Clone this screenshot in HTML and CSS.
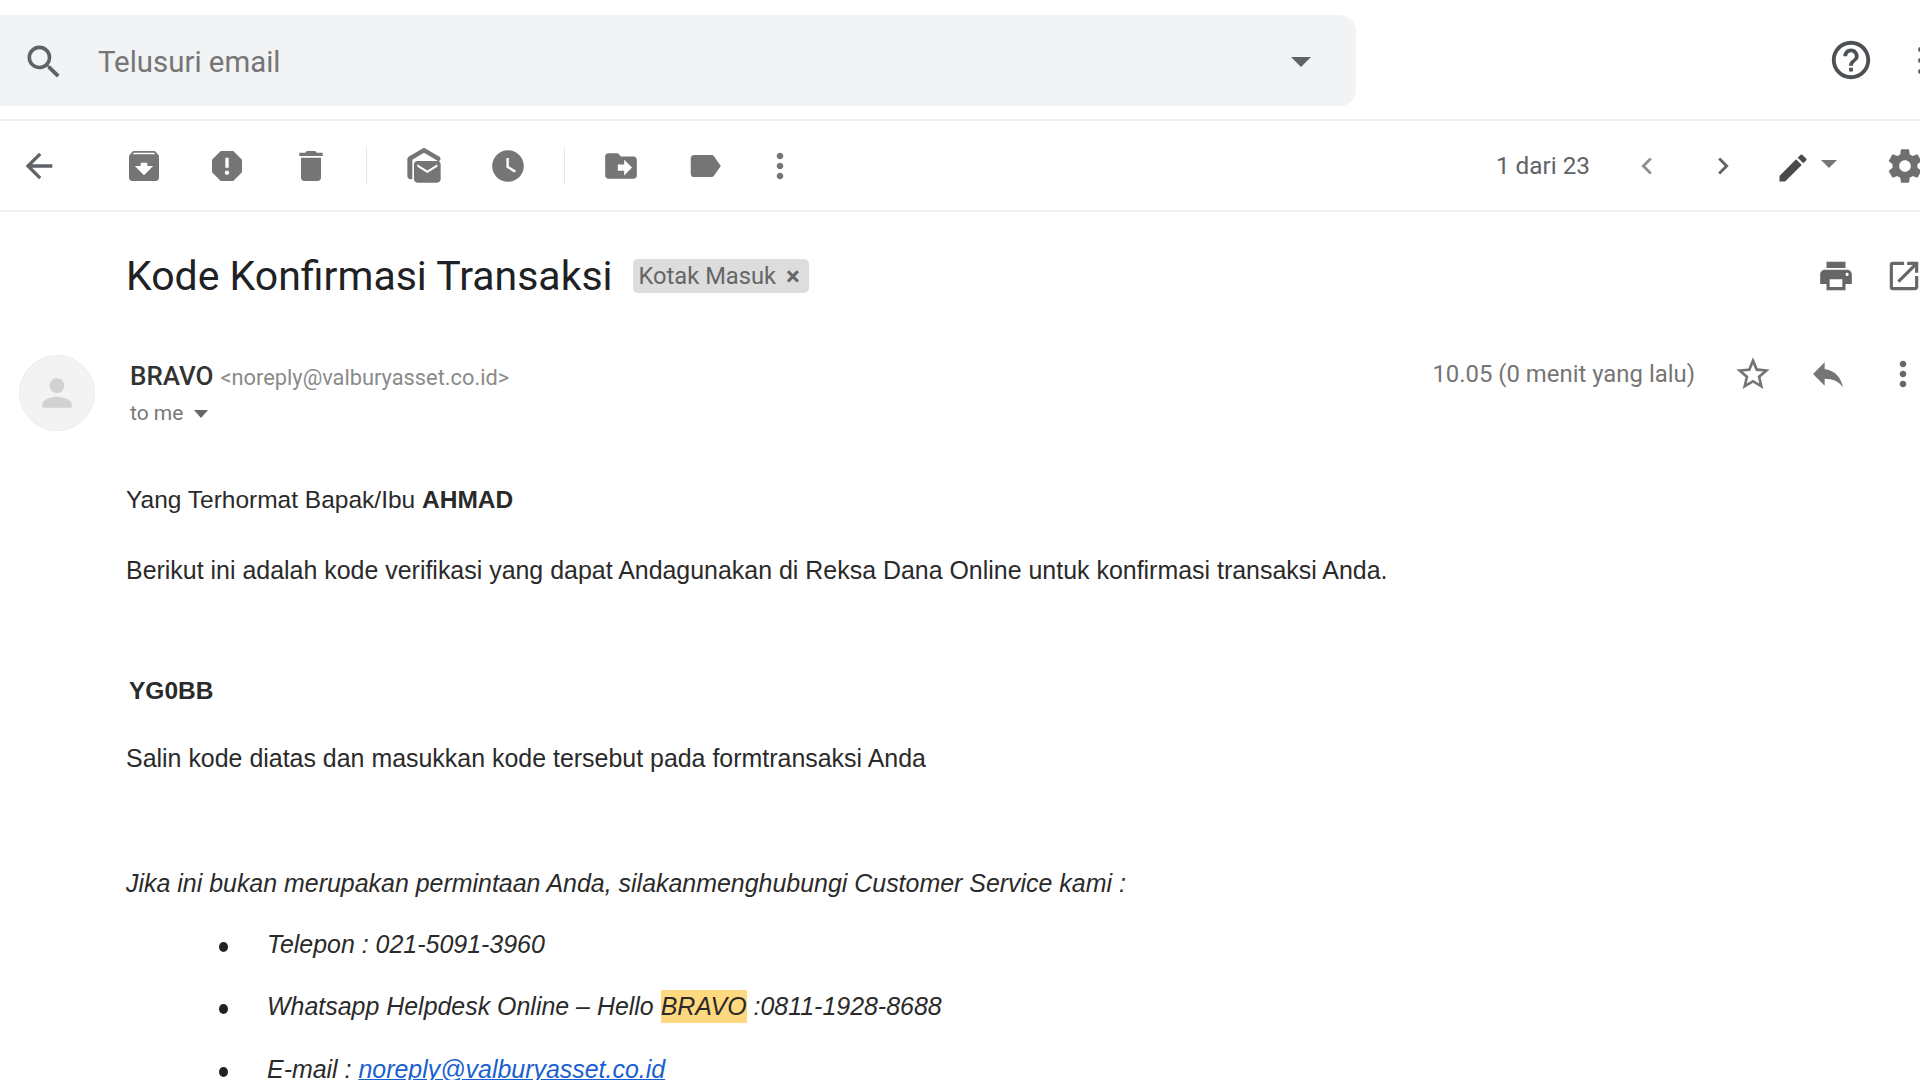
FILE: index.html
```html
<!DOCTYPE html>
<html lang="id">
<head>
<meta charset="utf-8">
<title>Kode Konfirmasi Transaksi</title>
<link rel="stylesheet" href="styles.css">
</head>
<body>
<header class="topbar">
  <div class="search">
    <svg class="ic-search" viewBox="0 0 24 24"><path d="M15.5 14h-.79l-.28-.27A6.47 6.47 0 0 0 16 9.5 6.5 6.5 0 1 0 9.5 16c1.61 0 3.09-.59 4.23-1.57l.27.28v.79l5 4.99L20.49 19l-4.99-5zm-6 0C7.01 14 5 11.99 5 9.5S7.01 5 9.5 5 14 7.01 14 9.5 11.99 14 9.5 14z"/></svg>
    <span class="search-text">Telusuri email</span>
    <span class="search-caret"></span>
  </div>
  <div class="top-right">
    <svg class="ic-help" viewBox="0 0 24 24"><path d="M11 18h2v-2h-2v2zm1-16C6.48 2 2 6.48 2 12s4.48 10 10 10 10-4.48 10-10S17.52 2 12 2zm0 18c-4.41 0-8-3.59-8-8s3.59-8 8-8 8 3.59 8 8-3.59 8-8 8zm0-14c-2.21 0-4 1.79-4 4h2c0-1.1.9-2 2-2s2 .9 2 2c0 2-3 1.75-3 5h2c0-2.25 3-2.5 3-5 0-2.21-1.79-4-4-4z"/></svg>
    <span class="apps-dots"><i></i><i></i><i></i></span>
  </div>
</header>

<nav class="toolbar">
  <span class="tb back"><svg viewBox="0 0 24 24"><path d="M20 11H7.83l5.59-5.59L12 4l-8 8 8 8 1.41-1.41L7.83 13H20v-2z"/></svg></span>
  <span class="tb first"><svg viewBox="0 0 24 24"><path d="M20.54 5.23l-1.39-1.68C18.88 3.21 18.47 3 18 3H6c-.47 0-.88.21-1.16.55L3.46 5.23C3.17 5.57 3 6.02 3 6.5V19c0 1.1.9 2 2 2h14c1.1 0 2-.9 2-2V6.5c0-.48-.17-.93-.46-1.27zM12 17.5L6.5 12H10v-2h4v2h3.5L12 17.5zM5.12 5l.81-1h12l.94 1H5.12z"/></svg></span>
  <span class="tb"><svg viewBox="0 0 24 24"><path d="M15.73 3H8.27L3 8.27v7.46L8.27 21h7.46L21 15.73V8.27L15.73 3zM12 17.3c-.72 0-1.3-.58-1.3-1.3 0-.72.58-1.3 1.3-1.3.72 0 1.3.58 1.3 1.3 0 .72-.58 1.3-1.3 1.3zm1-4.3h-2V7h2v6z"/></svg></span>
  <span class="tb"><svg viewBox="0 0 24 24"><path d="M6 19c0 1.1.9 2 2 2h8c1.1 0 2-.9 2-2V7H6v12zM19 4h-3.5l-1-1h-5l-1 1H5v2h14V4z"/></svg></span>
  <span class="sep sep-a"></span>
  <span class="tb"><svg viewBox="0 0 24 24"><path d="M21.99 8c0-.72-.37-1.35-.94-1.7L12 1 2.95 6.3C2.38 6.65 2 7.28 2 8v10c0 1.1.9 2 2 2h1V8.2l7-4.1 8.9 5.2L22 8zM20 9H8c-1.1 0-2 .9-2 2v9c0 1.1.9 2 2 2h12c1.1 0 2-.9 2-2v-9c0-1.1-.9-2-2-2zm0 3.5l-6 3.75-6-3.75V11l6 3.75L20 11v1.5z"/></svg></span>
  <span class="tb tb-small"><svg viewBox="0 0 24 24"><path d="M11.99 2C6.47 2 2 6.48 2 12s4.47 10 9.99 10C17.52 22 22 17.52 22 12S17.52 2 11.99 2zM16.2 16.2L11 13V7h1.5v5.2l4.5 2.7-.8 1.3z"/></svg></span>
  <span class="sep sep-b"></span>
  <span class="tb tb-small"><svg viewBox="0 0 24 24"><path d="M20 6h-8l-2-2H4c-1.1 0-2 .9-2 2v12c0 1.1.9 2 2 2h16c1.1 0 2-.9 2-2V8c0-1.1-.9-2-2-2zm-6 12v-3h-4v-4h4V8l5 5-5 5z"/></svg></span>
  <span class="tb tb-small"><svg viewBox="0 0 24 24"><path d="M17.63 5.84C17.27 5.33 16.67 5 16 5L5 5.01C3.9 5.01 3 5.9 3 7v10c0 1.1.9 1.99 2 1.99L16 19c.67 0 1.27-.33 1.63-.84L22 12l-4.37-6.16z"/></svg></span>
  <span class="tb narrow"><svg viewBox="0 0 24 24"><path d="M12 8c1.1 0 2-.9 2-2s-.9-2-2-2-2 .9-2 2 .9 2 2 2zm0 2c-1.1 0-2 .9-2 2s.9 2 2 2 2-.9 2-2-.9-2-2-2zm0 6c-1.1 0-2 .9-2 2s.9 2 2 2 2-.9 2-2-.9-2-2-2z"/></svg></span>
  <div class="tb-right">
    <span class="pager">1 dari 23</span>
    <span class="chev chev-prev"><svg viewBox="0 0 24 24"><path d="M15.41 7.41L14 6l-6 6 6 6 1.41-1.41L10.83 12z"/></svg></span>
    <span class="chev"><svg viewBox="0 0 24 24"><path d="M10 6L8.59 7.41 13.17 12l-4.58 4.59L10 18l6-6z"/></svg></span>
    <span class="pen"><svg viewBox="0 0 24 24"><path d="M3 17.25V21h3.75L17.81 9.94l-3.75-3.75L3 17.25zM20.71 7.04a1 1 0 0 0 0-1.41l-2.34-2.34a1 1 0 0 0-1.41 0l-1.83 1.83 3.75 3.75 1.83-1.83z"/></svg></span>
    <span class="pen-caret"></span>
    <span class="gear"><svg viewBox="0 0 24 24"><path d="M19.43 12.98c.04-.32.07-.64.07-.98s-.03-.66-.07-.98l2.11-1.65c.19-.15.24-.42.12-.64l-2-3.46c-.12-.22-.39-.3-.61-.22l-2.49 1c-.52-.4-1.08-.73-1.69-.98l-.38-2.65A.49.49 0 0 0 14 2h-4c-.25 0-.46.18-.49.42l-.38 2.65c-.61.25-1.17.59-1.69.98l-2.49-1c-.23-.09-.49 0-.61.22l-2 3.46c-.13.22-.07.49.12.64l2.11 1.65c-.04.32-.07.65-.07.98s.03.66.07.98l-2.11 1.65c-.19.15-.24.42-.12.64l2 3.46c.12.22.39.3.61.22l2.49-1c.52.4 1.08.73 1.69.98l.38 2.65c.03.24.24.42.49.42h4c.25 0 .46-.18.49-.42l.38-2.65c.61-.25 1.17-.59 1.69-.98l2.49 1c.23.09.49 0 .61-.22l2-3.46c.12-.22.07-.49-.12-.64l-2.11-1.65zM12 15.5c-1.93 0-3.5-1.57-3.5-3.5s1.57-3.5 3.5-3.5 3.5 1.57 3.5 3.5-1.57 3.5-3.5 3.5z"/></svg></span>
  </div>
</nav>

<section class="subject">
  <h1 class="subject-title">Kode Konfirmasi Transaksi</h1>
  <span class="badge">Kotak Masuk <b class="badge-x">×</b></span>
  <div class="subject-actions">
    <svg class="ic-print" viewBox="0 0 24 24"><path d="M19 8H5c-1.66 0-3 1.34-3 3v6h4v4h12v-4h4v-6c0-1.66-1.34-3-3-3zm-3 11H8v-5h8v5zm3-7c-.55 0-1-.45-1-1s.45-1 1-1 1 .45 1 1-.45 1-1 1zm-1-9H6v4h12V3z"/></svg>
    <svg class="ic-open" viewBox="0 0 24 24"><path d="M19 19H5V5h7V3H5a2 2 0 0 0-2 2v14a2 2 0 0 0 2 2h14c1.1 0 2-.9 2-2v-7h-2v7zM14 3v2h3.59l-9.83 9.83 1.41 1.41L19 6.41V10h2V3h-7z"/></svg>
  </div>
</section>

<section class="sender">
  <div class="avatar"><svg viewBox="0 0 24 24"><path d="M12 12c2.21 0 4-1.79 4-4s-1.79-4-4-4-4 1.79-4 4 1.79 4 4 4zm0 2c-2.67 0-8 1.34-8 4v2h16v-2c0-2.66-5.33-4-8-4z"/></svg></div>
  <div class="sender-info">
    <div class="from"><span class="from-name">BRAVO</span> <span class="from-mail">&lt;noreply@valburyasset.co.id&gt;</span></div>
    <div class="to">to me <span class="to-caret"></span></div>
  </div>
  <div class="sender-right">
    <span class="time">10.05 (0 menit yang lalu)</span>
    <span class="act"><svg viewBox="0 0 24 24"><path d="M22 9.24l-7.19-.62L12 2 9.19 8.63 2 9.24l5.46 4.73L5.82 21 12 17.27 18.18 21l-1.63-7.03L22 9.24zM12 15.4l-3.76 2.27 1-4.28-3.32-2.88 4.38-.38L12 6.1l1.71 4.04 4.38.38-3.32 2.88 1 4.28L12 15.4z"/></svg></span>
    <span class="act"><svg viewBox="0 0 24 24"><path d="M10 9V5l-7 7 7 7v-4.1c5 0 8.5 1.6 11 5.1-1-5-4-10-11-11z"/></svg></span>
    <span class="act act-more"><svg viewBox="0 0 24 24"><path d="M12 8c1.1 0 2-.9 2-2s-.9-2-2-2-2 .9-2 2 .9 2 2 2zm0 2c-1.1 0-2 .9-2 2s.9 2 2 2 2-.9 2-2-.9-2-2-2zm0 6c-1.1 0-2 .9-2 2s.9 2 2 2 2-.9 2-2-.9-2-2-2z"/></svg></span>
  </div>
</section>

<main class="message">
  <p class="greet">Yang Terhormat Bapak/Ibu <strong>AHMAD</strong></p>
  <p class="intro">Berikut ini adalah kode verifikasi yang dapat Andagunakan di Reksa Dana Online untuk konfirmasi transaksi Anda.</p>
  <p class="code"><strong>YG0BB</strong></p>
  <p class="copy">Salin kode diatas dan masukkan kode tersebut pada formtransaksi Anda</p>
  <p class="note"><em>Jika ini bukan merupakan permintaan Anda, silakanmenghubungi Customer Service kami :</em></p>
  <ul class="contacts">
    <li><em>Telepon : 021-5091-3960</em></li>
    <li><em>Whatsapp Helpdesk Online – Hello <mark class="hl">BRAVO</mark> :0811-1928-8688</em></li>
    <li><em>E-mail : <a class="mail-link" href="#">noreply@valburyasset.co.id</a></em></li>
  </ul>
</main>
</body>
</html>
```

FILE: styles.css
```css
* { box-sizing: border-box; }
html, body { margin: 0; padding: 0; height: 100%; overflow: hidden; background: #fff; }
body { width: 1920px; height: 1080px; font-family: "Liberation Sans", Arial, sans-serif; color: #222; }
svg { display: block; fill: currentColor; }

.topbar { height: 121px; padding-top: 15px; display: flex; border-bottom: 2px solid #eff0f3; }
.search { width: 1356px; height: 91px; padding-top: 2px; background: #f1f3f4; border-radius: 0 16px 16px 0; display: flex; align-items: center; color: #5f6368; flex: none; }
.ic-search { width: 44px; height: 44px; margin-left: 22px; }
.search-text { font-family: Roboto, sans-serif; font-size: 29.4px; margin-left: 32px; color: #757575; }
.search-caret { margin-left: auto; margin-right: 45px; width: 0; height: 0; border-left: 10px solid transparent; border-right: 10px solid transparent; border-top: 10px solid #5f6368; }
.top-right { flex: 1; display: flex; align-items: center; height: 90px; color: #4d5156; }
.ic-help { width: 46px; height: 46px; margin-left: 472px; flex: none; }
.apps-dots { display: flex; flex-direction: column; gap: 6px; margin-left: 44px; flex: none; }
.apps-dots i { width: 5px; height: 5px; border-radius: 50%; background: #5f6368; display: block; }

.toolbar { height: 91px; display: flex; align-items: center; border-bottom: 2px solid #eff0f3; color: #757575; }
.tb { width: 83.5px; display: flex; justify-content: center; flex: none; }
.tb svg { width: 40px; height: 40px; }
.tb-small svg { width: 38px; height: 38px; }
.tb.back { width: 78px; color: #5f6368; }
.tb.first { margin-left: 24px; }
.tb.narrow { width: 66px; }
.sep { width: 1px; height: 38px; background: #e6e6e6; flex: none; }
.sep-a { margin: 0 16px 0 13px; }
.sep-b { margin: 0 15px 0 14px; }
.tb-right { margin-left: auto; display: flex; align-items: center; margin-right: -5px; }
.pager { font-family: Roboto, sans-serif; font-size: 24.3px; color: #5f6368; margin-right: 19px; }
.chev { width: 76px; display: flex; justify-content: center; color: #5f6368; }
.chev-prev { color: #909090; }
.chev svg { width: 34px; height: 34px; }
.pen { width: 36px; margin-left: 14px; margin-top: 4px; color: #4a4a4a; }
.pen svg { width: 36px; height: 36px; }
.pen-caret { margin-left: 10px; margin-top: -4px; width: 0; height: 0; border-left: 8px solid transparent; border-right: 8px solid transparent; border-top: 8px solid #757575; }
.gear { margin-left: 48px; color: #6f6f6f; }
.gear svg { width: 40px; height: 40px; }

.subject { height: 127px; display: flex; align-items: center; padding-left: 126px; }
.subject-title { margin: 0; font-family: Roboto, sans-serif; font-weight: 400; font-size: 41px; color: #202124; }
.badge { margin-left: 20px; height: 34px; padding: 0 9px 0 6px; border-radius: 5px; background: #dddddd; color: #666; font-family: Roboto, sans-serif; font-size: 23.7px; display: flex; align-items: center; gap: 10px; }
.badge-x { font-weight: 700; font-size: 26px; }
.subject-actions { margin-left: auto; display: flex; align-items: center; color: #666; margin-right: -3px; }
.ic-print { width: 38px; height: 38px; }
.ic-open { width: 38px; height: 38px; margin-left: 30px; }

.sender { height: 146px; display: flex; padding-left: 19px; padding-top: 16px; }
.avatar { width: 76px; height: 76px; border-radius: 50%; background: #f3f3f3; border: 1px solid #ececec; color: #d2d2d2; display: flex; align-items: center; justify-content: center; flex: none; }
.avatar svg { width: 44px; height: 44px; }
.sender-info { margin-left: 35px; padding-top: 5px; }
.from { font-family: Roboto, sans-serif; font-size: 20px; color: #999; line-height: 32px; white-space: nowrap; display: flex; align-items: baseline; gap: 7px; }
.from-name { font-size: 26px; font-weight: 500; color: #333; }
.from-mail { font-size: 21.8px; color: #8a8a8a; }
.to { font-family: Roboto, sans-serif; font-size: 21px; color: #777; line-height: 30px; margin-top: 4px; display: flex; align-items: center; gap: 11px; }
.to-caret { width: 0; height: 0; border-left: 7px solid transparent; border-right: 7px solid transparent; border-top: 8px solid #666; margin-top: 2px; }
.sender-right { margin-left: auto; display: flex; align-items: center; height: 38px; color: #757575; margin-right: -20px; }
.time { font-family: Roboto, sans-serif; font-size: 23.9px; color: #757575; margin-right: 20px; }
.act { width: 75px; display: flex; justify-content: center; }
.act svg { width: 40px; height: 40px; }
.act-more { color: #666; }

.message { font-size: 24.94px; line-height: 30px; padding-left: 126px; color: #2a2a2a; }
.message p { margin: 0; }
.message .greet { font-size: 24.5px; }
.message .intro { margin-top: 40px; }
.message .code { margin-top: 91px; padding-left: 3px; font-size: 24.5px; }
.message .copy { margin-top: 37px; }
.message .note { margin-top: 95px; }
.contacts { margin: 31px 0 0; padding: 0 0 0 141px; list-style: none; }
.contacts li { margin-bottom: 31px; }
.contacts li::before { content: ""; display: inline-block; width: 9px; height: 10px; border-radius: 50%; background: #222; margin-left: -48px; margin-right: 39px; vertical-align: 1px; }
.hl { display: inline-block; line-height: 33px; background: #ffd97f; color: inherit; }
.mail-link { color: #1a5fd0; text-decoration: underline; text-underline-offset: 1px; }
```
